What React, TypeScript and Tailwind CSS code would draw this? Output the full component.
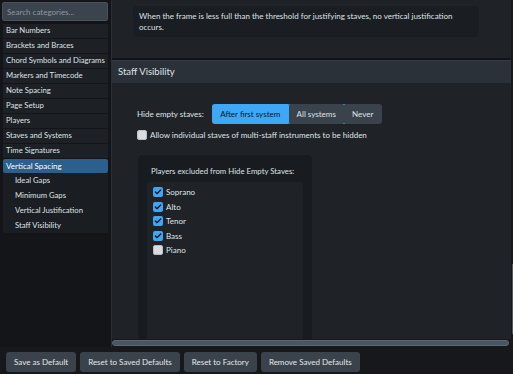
import { Check } from 'lucide-react';

const categories = [
  'Bar Numbers',
  'Brackets and Braces',
  'Chord Symbols and Diagrams',
  'Markers and Timecode',
  'Note Spacing',
  'Page Setup',
  'Players',
  'Staves and Systems',
  'Time Signatures',
];

const subItems = ['Ideal Gaps', 'Minimum Gaps', 'Vertical Justification', 'Staff Visibility'];

const players = [
  { name: 'Soprano', checked: true },
  { name: 'Alto', checked: true },
  { name: 'Tenor', checked: true },
  { name: 'Bass', checked: true },
  { name: 'Piano', checked: false },
];

function Box({ checked }: { checked: boolean }) {
  if (!checked) {
    return <span className="w-[10px] h-[10px] rounded-[2px] bg-[#d8dce1] border border-[#b9bfc6] shrink-0" />;
  }
  return (
    <span className="w-[10px] h-[10px] rounded-[2px] bg-[#3ea6f4] flex items-center justify-center shrink-0">
      <Check className="w-[8px] h-[8px] text-[#0b1622]" strokeWidth={4} />
    </span>
  );
}

// small blue focus ticks on segment dividers
function Ticks() {
  return (
    <>
      <span className="absolute left-[-1px] top-0 w-[2px] h-[1px] bg-[#2e7fbf]" />
      <span className="absolute left-[-1px] bottom-0 w-[2px] h-[1px] bg-[#2e7fbf]" />
    </>
  );
}

export default function App() {
  return (
    <div
      className="w-[513px] h-[374px] bg-[#16181b] text-[#dfe3e7] flex flex-col overflow-hidden"
      style={{ fontFamily: 'Lato, "Noto Sans", sans-serif' }}
    >
      <div className="flex h-[347px]">
        {/* Sidebar */}
        <div className="w-[111px] shrink-0 bg-[#131518] flex flex-col pt-[2px] pl-[2px] pr-[3px]">
          <div className="h-[19px] bg-[#3b434d] border border-[#48515c] rounded-[2px] px-[4px] flex items-center text-[8px] text-[#8d97a1]">
            Search categories...
          </div>
          <div className="mt-[3px] flex flex-col gap-[1px] pl-[1px]">
            {categories.map((c) => (
              <div key={c} className="h-[14px] bg-[#1d2025] px-[3px] flex items-center text-[7.7px] whitespace-nowrap">
                {c}
              </div>
            ))}
            <div className="h-[14px] bg-[#2b5f8c] rounded-[2px] px-[3px] flex items-center text-[8px] text-white">
              Vertical Spacing
            </div>
          </div>
          <div className="flex flex-col bg-[#1a1d21] ml-[1px]">
            {subItems.map((s) => (
              <div key={s} className="h-[15px] pl-[12px] flex items-center text-[7.7px]">
                {s}
              </div>
            ))}
          </div>
        </div>

        {/* Main panel */}
        <div className="w-[400px] shrink-0 flex flex-col border-l border-[#2a2f36]">
          <div className="flex-1 flex flex-col bg-[#1f2328] overflow-hidden">
            <div className="h-[58px] shrink-0 pt-[6px] pl-[21px]">
              <div className="w-[346px] h-[31px] bg-[#1a1d21] rounded-[4px] px-[6px] pt-[5px] text-[8px] leading-[11px]">
                When the frame is less full than the threshold for justifying staves, no vertical justification occurs.
              </div>
            </div>
            <div className="h-[2px] bg-[#111315]" />
            <div className="h-[23px] bg-[#2b3139] border-t border-[#343b44] pl-[6px] flex items-center text-[9.5px]">
              Staff Visibility
            </div>
            <div className="flex-1 flex flex-col pl-[25px] pt-[21px]">
              <div className="flex items-center gap-[8px] text-[8px]">
                <span>Hide empty staves:</span>
                <div className="flex h-[20px] rounded-[3px] bg-[#3a424c]">
                  <div className="w-[77px] bg-[#3ea7f6] rounded-l-[3px] text-[#0c1824] flex items-center justify-center">
                    After first system
                  </div>
                  <div className="relative w-[55px] flex items-center justify-center">
                    <Ticks />
                    All systems
                  </div>
                  <div className="relative w-[38px] flex items-center justify-center">
                    <Ticks />
                    Never
                  </div>
                </div>
              </div>
              <div className="flex items-center gap-[3px] mt-[5px] text-[8px]">
                <Box checked={false} />
                <span>Allow individual staves of multi-staff instruments to be hidden</span>
              </div>
              <div className="mt-[14px] ml-[1px] w-[174px] flex-1 bg-[#181b1f] rounded-t-[5px] flex flex-col px-[9px] pt-[11px]">
                <div className="text-[7.8px] pl-[4px] h-[16px] whitespace-nowrap">Players excluded from Hide Empty Staves:</div>
                <div className="flex-1 bg-[#1f2328] rounded-t-[3px] px-[6px] pt-[5px] flex flex-col gap-[4.5px]">
                  {players.map((p) => (
                    <div key={p.name} className="flex items-center gap-[3px] h-[10px] text-[8px]">
                      <Box checked={p.checked} />
                      <span>{p.name}</span>
                    </div>
                  ))}
                </div>
              </div>
            </div>
          </div>
          <div className="h-[8px] shrink-0 bg-[#16181b] pt-[1px] pr-[2px]">
            <div className="h-[6px] bg-[#4a5560] border border-[#5a6672] rounded-[3px]" />
          </div>
        </div>
        <div className="flex-1 flex flex-col pt-[264px] pb-[12px]">
          <div className="w-[2px] ml-[1px] h-[70px] bg-[#4b5967]" />
        </div>
      </div>

      {/* Bottom buttons */}
      <div className="flex gap-[4px] pl-[6px] pt-[5px]">
        {['Save as Default', 'Reset to Saved Defaults', 'Reset to Factory', 'Remove Saved Defaults'].map((b) => (
          <button
            key={b}
            className="h-[20px] px-[8px] bg-[#3a424c] rounded-[3px] text-[8px] text-[#e4e7ea] whitespace-nowrap"
          >
            {b}
          </button>
        ))}
      </div>
    </div>
  );
}
